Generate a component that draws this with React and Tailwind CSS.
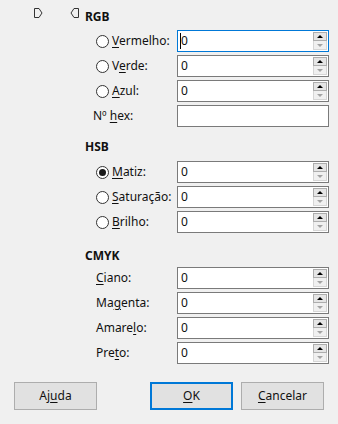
import React from "react";

// small pentagon markers at the top-left
const Marker = ({ flip }) => (
  <svg width="9" height="10" viewBox="0 0 9 10" className={flip ? "-scale-x-100" : ""}>
    <path d="M0.5 0.5h4.5l3 4.5-3 4.5h-4.5z" fill="none" stroke="#333" strokeWidth="1" />
  </svg>
);

const Spin = () => (
  <div className="absolute right-[1px] top-[1px] flex w-[14px] flex-col">
    <div className="flex h-[9px] items-center justify-center border border-[#adadad] bg-[#e5e5e5]">
      <span className="h-0 w-0 border-b-[3px] border-l-[3px] border-r-[3px] border-b-black border-l-transparent border-r-transparent" />
    </div>
    <div className="flex h-[9px] items-center justify-center border border-t-0 border-[#d6d6d6] bg-[#f0f0f0]">
      <span className="h-0 w-0 border-l-[3px] border-r-[3px] border-t-[3px] border-l-transparent border-r-transparent border-t-[#a3a3a3]" />
    </div>
  </div>
);

const Field = ({ value = "0", focused, spin = true }) => (
  <div
    className={`relative h-[22px] w-[152px] shrink-0 border bg-white pl-[3px] leading-[20px] ${
      focused ? "border-[#0078d7]" : "border-[#7a7a7a]"
    }`}
  >
    {value}
    {focused && <span className="absolute left-[2px] top-[2px] h-[16px] w-px bg-black" />}
    {spin && <Spin />}
  </div>
);

const Radio = ({ checked }) => (
  <span className="flex h-[13px] w-[13px] shrink-0 items-center justify-center rounded-full border border-[#333] bg-white">
    {checked && <span className="h-[7px] w-[7px] rounded-full bg-[#1a1a1a]" />}
  </span>
);

// label text with the access-key letter underlined
const Label = ({ pre, key1, post }) => (
  <span>
    {pre}
    <u className="underline-offset-2">{key1}</u>
    {post}
  </span>
);

const Row = ({ radio, checked, label, indent = "pl-[11px]", focused, spin }) => (
  <div className={`flex h-[22px] items-center ${indent}`}>
    <div className="flex flex-1 items-center gap-[3px]">
      {radio && <Radio checked={checked} />}
      {label}
    </div>
    <Field focused={focused} spin={spin} value={spin === false ? "" : "0"} />
  </div>
);

const Header = ({ children, className }) => (
  <div className={`h-[16px] text-[12px] font-bold leading-[16px] ${className}`}>{children}</div>
);

export default function App() {
  return (
    <div
      className="h-[424px] w-[338px] bg-[#f0f0f0] text-[12px] text-[#111]"
      style={{ fontFamily: '"Noto Sans", "Open Sans", sans-serif' }}
    >
      <div className="flex pt-[9px]">
        <div className="-mt-[1px] flex w-[85px] shrink-0 items-start">
          <div className="ml-[34px]">
            <Marker />
          </div>
          <div className="ml-[27px]">
            <Marker flip />
          </div>
        </div>

        <div className="flex w-[244px] flex-col">
          <Header className="mb-[5px]">RGB</Header>
          <div className="flex flex-col gap-[3px]">
            <Row radio label={<Label pre="" key1="V" post="ermelho:" />} focused />
            <Row radio label={<Label pre="V" key1="e" post="rde:" />} />
            <Row radio label={<Label pre="" key1="A" post="zul:" />} />
            <Row indent="pl-[8px]" label={<Label pre="Nº " key1="h" post="ex:" />} spin={false} />
          </div>

          <Header className="mb-[6px] mt-[12px]">HSB</Header>
          <div className="flex flex-col gap-[3px]">
            <Row radio checked label={<Label pre="" key1="M" post="atiz:" />} />
            <Row radio label={<Label pre="" key1="S" post="aturação:" />} />
            <Row radio label={<Label pre="" key1="B" post="rilho:" />} />
          </div>

          <Header className="mb-[3px] mt-[15px]">CMYK</Header>
          <div className="flex flex-col gap-[3px]">
            <Row label={<Label pre="" key1="C" post="iano:" />} />
            <Row label={<Label pre="Ma" key1="g" post="enta:" />} />
            <Row label={<Label pre="Amare" key1="l" post="o:" />} />
            <Row label={<Label pre="Pre" key1="t" post="o:" />} />
          </div>
        </div>
      </div>

      <div className="mt-[18px] flex pl-[14px]">
        <button className="h-[28px] w-[83px] border border-[#adadad] bg-[#e1e1e1]">
          <Label pre="Aj" key1="u" post="da" />
        </button>
        <button className="ml-[53px] h-[28px] w-[83px] border-2 border-[#0078d7] bg-[#e1e1e1]">
          <Label pre="" key1="O" post="K" />
        </button>
        <button className="ml-[8px] h-[28px] w-[83px] border border-[#adadad] bg-[#e1e1e1]">
          <Label pre="" key1="C" post="ancelar" />
        </button>
      </div>
    </div>
  );
}
